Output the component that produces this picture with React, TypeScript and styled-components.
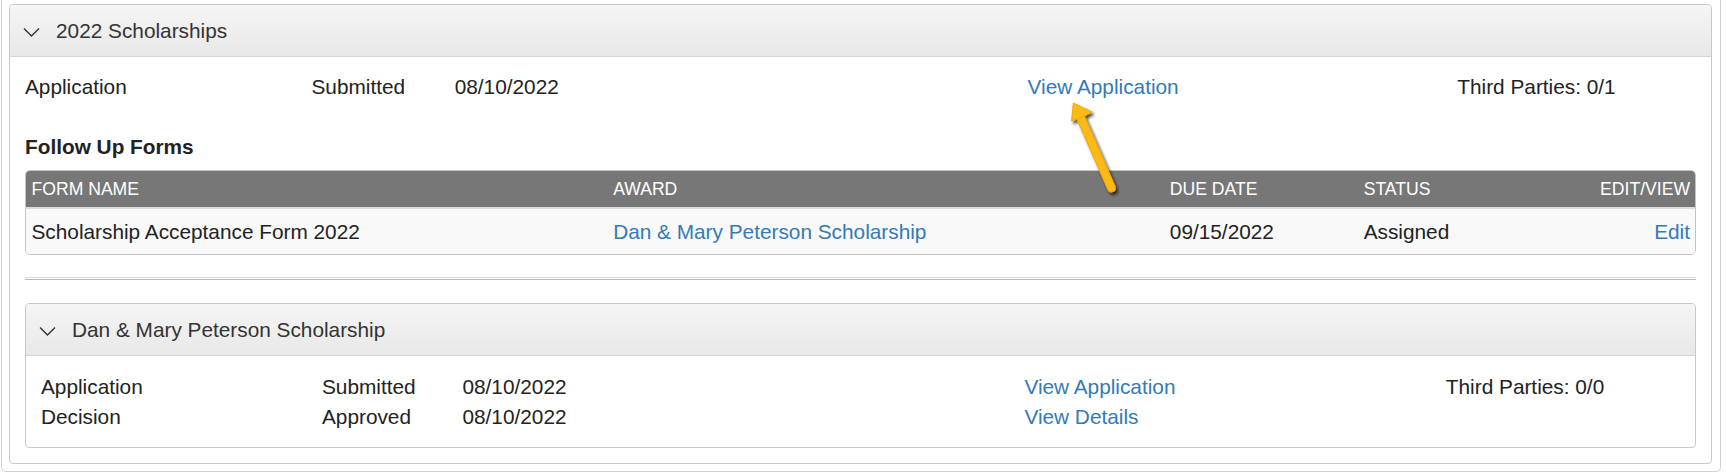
import React from 'react'
import styled, { createGlobalStyle } from 'styled-components'

const GlobalStyle = createGlobalStyle`
  body {
    margin: 0;
    background: #fff;
    color: #333;
    font-family: 'Liberation Sans', Arial, sans-serif;
    font-size: 20.8px;
  }
`

const infoCols = '6fr 3fr 12fr 9fr 5fr'
const tableCols = '582fr 557fr 194fr 194fr 143fr'

const Chevron: React.FC = () => (
  <ChevronSvg width="17" height="10" viewBox="0 0 17 10">
    <polyline points="1,1.5 8.5,9 16,1.5" fill="none" stroke="#333" strokeWidth="1.4" />
  </ChevronSvg>
)

const Arrow: React.FC = () => (
  <ArrowSvg width="80" height="110" viewBox="0 0 80 110">
    <defs>
      <filter id="shadow" x="-50%" y="-50%" width="200%" height="200%">
        <feDropShadow dx="2" dy="2.5" stdDeviation="1.6" floodColor="#000" floodOpacity="0.7" />
      </filter>
    </defs>
    <g filter="url(#shadow)">
      <line x1="20" y1="21" x2="51.5" y2="93" stroke="#f0aa00" strokeWidth="9" strokeLinecap="round" />
      <line x1="20" y1="21" x2="51.5" y2="93" stroke="#fdb913" strokeWidth="7" strokeLinecap="round" />
      <polygon points="13.3,8 32,17 21,23 11.5,26" fill="#fdb913" stroke="#f0aa00" strokeWidth="1" strokeLinejoin="round" />
    </g>
  </ArrowSvg>
)

type InfoRow = [string, string, string, string, string]

const App: React.FC = () => {
  const topRows: InfoRow[] = [['Application', 'Submitted', '08/10/2022', 'View Application', 'Third Parties: 0/1']]
  const awardRows: InfoRow[] = [
    ['Application', 'Submitted', '08/10/2022', 'View Application', 'Third Parties: 0/0'],
    ['Decision', 'Approved', '08/10/2022', 'View Details', ''],
  ]

  const renderInfo = (rows: InfoRow[]) => (
    <InfoGrid>
      {rows.map((r, i) => (
        <React.Fragment key={i}>
          <span>{r[0]}</span>
          <span>{r[1]}</span>
          <span>{r[2]}</span>
          <Link href="#">{r[3]}</Link>
          <span>{r[4]}</span>
        </React.Fragment>
      ))}
    </InfoGrid>
  )

  return (
    <>
      <GlobalStyle />
      <Page>
        <Panel>
          <PanelHeading>
            <Chevron />
            2022 Scholarships
          </PanelHeading>
          <PanelBody>
            {renderInfo(topRows)}
            <SectionTitle>Follow Up Forms</SectionTitle>
            <FormsTable>
              <HeadRow>
                <Cell>FORM NAME</Cell>
                <Cell>AWARD</Cell>
                <Cell>DUE DATE</Cell>
                <Cell>STATUS</Cell>
                <Cell $right>EDIT/VIEW</Cell>
              </HeadRow>
              <BodyRow>
                <Cell>Scholarship Acceptance Form 2022</Cell>
                <Cell>
                  <Link href="#">Dan &amp; Mary Peterson Scholarship</Link>
                </Cell>
                <Cell>09/15/2022</Cell>
                <Cell>Assigned</Cell>
                <Cell $right>
                  <Link href="#">Edit</Link>
                </Cell>
              </BodyRow>
            </FormsTable>
            <Divider />
            <Panel>
              <PanelHeading>
                <Chevron />
                Dan &amp; Mary Peterson Scholarship
              </PanelHeading>
              <PanelBody $top={16}>{renderInfo(awardRows)}</PanelBody>
            </Panel>
          </PanelBody>
        </Panel>
        <Arrow />
      </Page>
    </>
  )
}

const Page = styled.div`
  position: relative;
  box-sizing: border-box;
  width: 1720px;
  margin-left: 1px;
  padding: 4px 8px 7px 7px;
  border: 1px solid #d0d0d0;
  border-top: none;
  border-radius: 0 0 5px 5px;
`

const Panel = styled.div`
  border: 1px solid #c8c8c8;
  border-radius: 4px;
  background: #fff;
  overflow: hidden;
`

const PanelHeading = styled.div`
  display: flex;
  align-items: center;
  gap: 16px;
  height: 51px;
  padding: 0 13px;
  border-bottom: 1px solid #d4d4d4;
  background: linear-gradient(to bottom, #f5f5f5 0%, #e8e8e8 100%);
  color: #333;
  font-size: 20.8px;
`

const ChevronSvg = styled.svg`
  flex: none;
  margin-top: 3px;
`

const PanelBody = styled.div<{ $top?: number }>`
  padding: ${(p) => p.$top ?? 15}px 15px 15px;
`

const InfoGrid = styled.div`
  display: grid;
  grid-template-columns: ${infoCols};
  line-height: 30px;
  color: #222;
  white-space: nowrap;
`

const Link = styled.a`
  color: #337ab7;
  text-decoration: none;
`

const SectionTitle = styled.div`
  margin: 30px 0 8px;
  line-height: 30px;
  font-weight: bold;
  color: #222;
`

const FormsTable = styled.div`
  border: 1px solid #c4c4c4;
  border-radius: 5px;
  overflow: hidden;
`

const HeadRow = styled.div`
  display: grid;
  grid-template-columns: ${tableCols};
  align-items: center;
  height: 36px;
  background: #777;
  color: #fff;
  font-size: 17.6px;
  border-bottom: 2px solid #ddd;
`

const BodyRow = styled.div`
  display: grid;
  grid-template-columns: ${tableCols};
  align-items: center;
  height: 45px;
  background: #f9f9f9;
  color: #222;
`

const Cell = styled.div<{ $right?: boolean }>`
  padding: 0 5px 0 5.5px;
  white-space: nowrap;
  text-align: ${(p) => (p.$right ? 'right' : 'left')};
`

const Divider = styled.div`
  margin: 22px 0 23px;
  height: 1px;
  border-top: 1px solid #dcdcdc;
  border-bottom: 1px solid #b8b8b8;
`

const ArrowSvg = styled.svg`
  position: absolute;
  left: 1058px;
  top: 95px;
  overflow: visible;
  z-index: 2;
`

export default App
